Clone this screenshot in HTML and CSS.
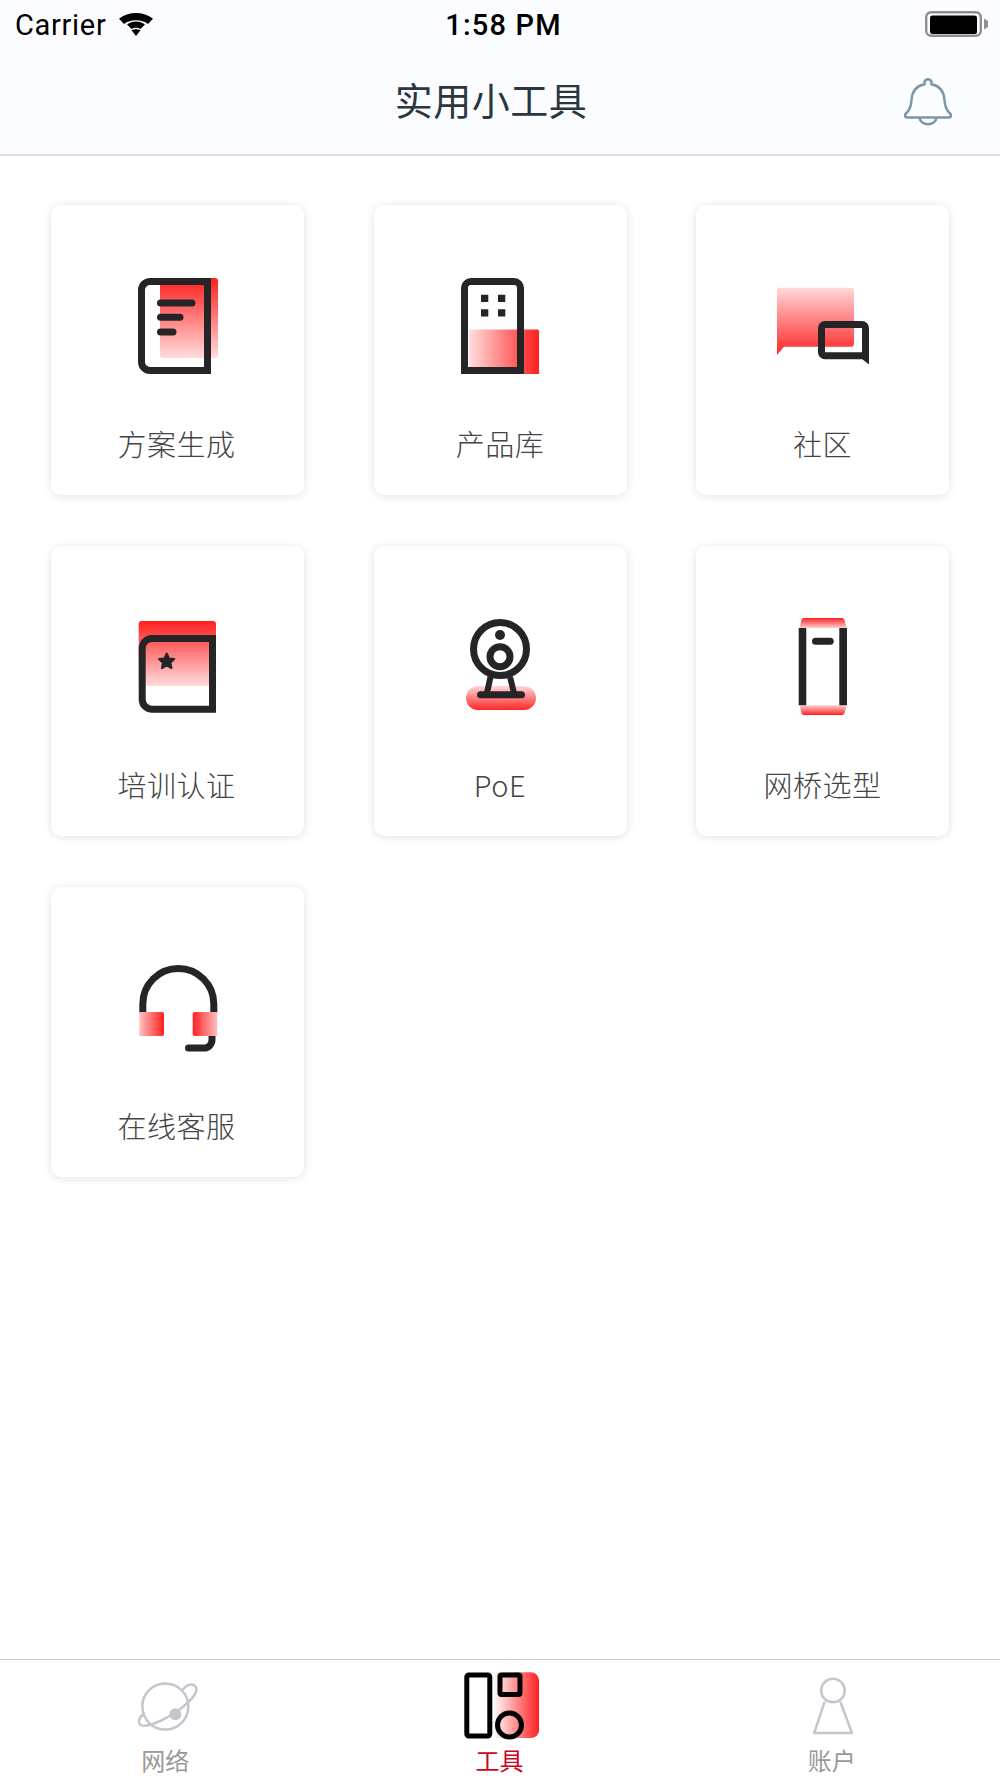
FILE: index.html
```html
<!DOCTYPE html>
<html lang="zh">
<head>
<meta charset="utf-8">
<title>实用小工具</title>
<link rel="stylesheet" href="styles.css">
</head>
<body>
<div class="page">
  <header class="header">
    <div class="status">
      <div class="status-left">
        <span class="carrier">Carrier</span>
        <svg class="wifi" viewBox="0 0 34 23"><path d="M0 5.700C9-1.900 25-1.900 34 5.700L29 11C22.500 6 11.500 6 5 11Z"/><path d="M8 11.500C13 7.500 21 7.500 26 11.500L21.500 16C19 14.300 15 14.300 12.500 16Z"/><path d="M12.500 17.300C15 15.800 19 15.800 21.500 17.300L17 23Z"/></svg>
      </div>
      <span class="time">1:58 PM</span>
      <svg class="battery" viewBox="0 0 63 26"><rect x="1.200" y="1.200" width="54.600" height="23.600" rx="5" fill="none" stroke="#8e8e8e" stroke-width="2.400"/><rect x="5" y="4.500" width="47" height="18.500" rx="2.500" fill="#000"/><path d="M59 7.500L63 10V16L59 18.500Z" fill="#8e8e8e"/></svg>
    </div>
    <div class="nav">
      <h1 class="title">实用小工具</h1>
      <svg class="bell" viewBox="0 0 48 48"><path d="M24 1.200a3.500 3.500 0 0 1 3.500 3.500v1.600C36 8 40 14.500 40.500 22C40.800 28 42 32 46 35.500C48 37.500 47 39.500 45 39.500H3C1 39.500 0 37.500 2 35.500C6 32 7.200 28 7.500 22C8 14.500 12 8 20.500 6.300V4.700A3.500 3.500 0 0 1 24 1.200Z"/><path d="M15.500 39.500C16 44 20 46.300 24 46.300S32 44 32.500 39.500"/></svg>
    </div>
  </header>

  <main class="grid">
    <a class="card">
      <svg class="icon" viewBox="0 0 101 100">
        <defs><linearGradient id="g1" x1="0" y1="0" x2="0" y2="1"><stop offset="0" stop-color="#ff1f1f"/><stop offset="1" stop-color="#ffdcdc"/></linearGradient></defs>
        <path d="M33 2H88a3 3 0 0 1 3 3V79a3 3 0 0 1-3 3H36a3 3 0 0 1-3-3Z" fill="url(#g1)"/>
        <path d="M80.500 5.500H23a8.500 8.500 0 0 0-8.500 8.500V86a8.500 8.500 0 0 0 8.500 8.500H80.500Z" fill="none" stroke="#252527" stroke-width="7"/>
        <path d="M33.500 27H65M33.500 41.300H53M33.500 56H46" fill="none" stroke="#252527" stroke-width="7" stroke-linecap="round"/>
      </svg>
      <span class="label">方案生成</span>
    </a>
    <a class="card">
      <svg class="icon" viewBox="0 0 101 100">
        <defs><linearGradient id="g2" x1="0" y1="0" x2="1" y2="0"><stop offset="0" stop-color="#ffdede"/><stop offset="1" stop-color="#ff1f1f"/></linearGradient></defs>
        <path d="M19 53.500H87a2 2 0 0 1 2 2V98H19Z" fill="url(#g2)"/>
        <path d="M14.500 94.500V12a6.500 6.500 0 0 1 6.500-6.500H64a6.500 6.500 0 0 1 6.500 6.500V94.500Z" fill="none" stroke="#252527" stroke-width="7"/>
        <path d="M31 18.700h7.300v7.300h-7.300ZM48 18.700h7.300v7.300h-7.300ZM31 33.300h7.300v7.300h-7.300ZM48 33.300h7.300v7.300h-7.300Z" fill="#252527"/>
      </svg>
      <span class="label">产品库</span>
    </a>
    <a class="card">
      <svg class="icon" viewBox="-1 0 101 100">
        <defs><linearGradient id="g3" x1="0" y1="0" x2="0" y2="1"><stop offset="0" stop-color="#ffd8d8"/><stop offset="1" stop-color="#ff2626"/></linearGradient></defs>
        <path d="M7 11.700H78a3 3 0 0 1 3 3V67.700a3 3 0 0 1-3 3H11L4 79V14.700a3 3 0 0 1 3-3Z" fill="url(#g3)"/>
        <rect x="48.500" y="48.500" width="44" height="31.300" rx="3.500" fill="none" stroke="#252527" stroke-width="7"/>
        <path d="M96 76V88.500L89 83Z" fill="#252527"/>
      </svg>
      <span class="label">社区</span>
    </a>
    <a class="card">
      <svg class="icon" viewBox="0 0 101 100">
        <defs><linearGradient id="g4" x1="0" y1="0" x2="0" y2="1"><stop offset="0" stop-color="#ff1f1f"/><stop offset="1" stop-color="#ffdcdc"/></linearGradient></defs>
        <path d="M14.700 4H86a3 3 0 0 1 3 3V69H11.700V7a3 3 0 0 1 3-3Z" fill="url(#g4)"/>
        <path d="M85.500 21.500H25a9.800 9.800 0 0 0-9.800 9.800V82.400a9.800 9.800 0 0 0 9.800 9.800H85.500Z" fill="none" stroke="#252527" stroke-width="7"/>
        <path d="M39.700 36.500L42 41.500L47.300 42.100L43.400 45.800L44.500 51.100L39.700 48.400L34.900 51.100L36 45.800L32.100 42.100L37.400 41.500Z" fill="#252527" stroke="#252527" stroke-width="2" stroke-linejoin="round"/>
      </svg>
      <span class="label">培训认证</span>
    </a>
    <a class="card">
      <svg class="icon" viewBox="0 0 101 100">
        <defs><linearGradient id="g5" x1="0" y1="0" x2="0" y2="1"><stop offset="0" stop-color="#ffd8d8"/><stop offset="1" stop-color="#ff2626"/></linearGradient></defs>
        <rect x="16" y="69" width="70" height="24" rx="12" fill="url(#g5)"/>
        <g fill="none" stroke="#252527">
          <circle cx="50" cy="32" r="26.500" stroke-width="7"/>
          <circle cx="50" cy="39.700" r="10" stroke-width="7"/>
          <path d="M40.500 60L36.500 78M60 60L64.500 78" stroke-width="6"/>
          <path d="M30.500 77.700H71.500" stroke-width="7" stroke-linecap="round"/>
        </g>
        <circle cx="50" cy="18" r="5" fill="#252527"/>
      </svg>
      <span class="label">PoE</span>
    </a>
    <a class="card">
      <svg class="icon" viewBox="-1 0 101 100">
        <defs>
          <linearGradient id="g6" x1="0" y1="0" x2="0" y2="1"><stop offset="0" stop-color="#ff1f1f"/><stop offset="1" stop-color="#ffd0d0"/></linearGradient>
          <linearGradient id="g7" x1="0" y1="0" x2="0" y2="1"><stop offset="0" stop-color="#ffd0d0"/><stop offset="1" stop-color="#ff1f1f"/></linearGradient>
        </defs>
        <path d="M31 1H69a2.500 2.500 0 0 1 2.500 2L73.500 11H26.500L28.500 3A2.500 2.500 0 0 1 31 1Z" fill="url(#g6)"/>
        <path d="M26.500 88.300H73.500L71.500 96A2.500 2.500 0 0 1 69 98H31A2.500 2.500 0 0 1 28.500 96Z" fill="url(#g7)"/>
        <path d="M25.700 11H33.300V88.300H25.700ZM66.300 11H74V88.300H66.300Z" fill="#252527"/>
        <path d="M42.500 24.300H57.200" fill="none" stroke="#252527" stroke-width="7" stroke-linecap="round"/>
      </svg>
      <span class="label">网桥选型</span>
    </a>
    <a class="card">
      <svg class="icon" viewBox="0 0 101 100">
        <defs>
          <linearGradient id="g8" x1="0" y1="0" x2="1" y2="0"><stop offset="0" stop-color="#ffc0c0"/><stop offset="1" stop-color="#ff2020"/></linearGradient>
          <linearGradient id="g9" x1="0" y1="0" x2="1" y2="0"><stop offset="0" stop-color="#ff2020"/><stop offset="1" stop-color="#ffc0c0"/></linearGradient>
        </defs>
        <path d="M15.800 55V46a35.500 35.500 0 0 1 71 0V55" fill="none" stroke="#252527" stroke-width="7"/>
        <path d="M85 78V82a8 8 0 0 1-8 8H61.500" fill="none" stroke="#252527" stroke-width="7" stroke-linecap="round"/>
        <path d="M12.300 54H35a2 2 0 0 1 2 2V76a2 2 0 0 1-2 2H12.300Z" fill="url(#g8)"/>
        <path d="M90.300 54H67.700a2 2 0 0 0-2 2V76a2 2 0 0 0 2 2H90.300Z" fill="url(#g9)"/>
      </svg>
      <span class="label">在线客服</span>
    </a>
  </main>

  <nav class="tabs">
    <a class="tab">
      <svg class="tab-icon" viewBox="-3.330 0 100 80">
        <g fill="none" stroke="#c5c5cf" stroke-width="2.500" stroke-linecap="round">
          <circle cx="45" cy="41.500" r="23"/>
          <path d="M23.500 48.500C18.500 53 17.500 57 19.500 59.500C22 62.500 31 60 41 55.500C56 48.500 69 37.500 74.500 29.500C77 25 76.500 21.500 73.500 20C70.500 18.800 66.500 20 63 24"/>
        </g>
        <circle cx="55" cy="49.300" r="6" fill="#c5c5cf"/>
      </svg>
      <span class="tab-label">网络</span>
    </a>
    <a class="tab tab-active">
      <svg class="tab-icon" viewBox="0 0 100 80">
        <defs><linearGradient id="g10" x1="0" y1="0" x2="1" y2="0"><stop offset="0" stop-color="#fff"/><stop offset="1" stop-color="#ff1f1f"/></linearGradient></defs>
        <path d="M42.700 7.300H81a8 8 0 0 1 8 8V65a8 8 0 0 1-8 8H42.700Z" fill="url(#g10)"/>
        <g fill="none" stroke="#000" stroke-width="5">
          <rect x="16.800" y="10" width="23" height="61" rx="2"/>
          <rect x="50" y="10" width="20" height="19.500" rx="1.500"/>
          <circle cx="59.500" cy="60" r="12"/>
        </g>
      </svg>
      <span class="tab-label">工具</span>
    </a>
    <a class="tab">
      <svg class="tab-icon" viewBox="-6.670 0 100 80">
        <g fill="none" stroke="#c5c5cf" stroke-width="2.500" stroke-linejoin="round">
          <circle cx="43.300" cy="25.500" r="11.800"/>
          <path d="M35 36.700L24.500 68H62.300L50.700 36.700"/>
        </g>
      </svg>
      <span class="tab-label">账户</span>
    </a>
  </nav>
</div>
</body>
</html>
```

FILE: styles.css
```css
* { box-sizing: border-box; }
html, body { margin: 0; padding: 0; background: #fff; }
body { font-family: "Noto Sans CJK SC", "Noto Sans", sans-serif; }
.page { display: flex; flex-direction: column; height: 1778px; overflow: hidden; }

.header { background: #fbfcff; border-bottom: 2px solid #dedede; height: 156px; flex: none; }
.status { display: grid; grid-template-columns: 1fr auto 1fr; align-items: center; height: 50px; padding: 0 12px 0 15px; font-family: Roboto, "Liberation Sans", sans-serif; font-size: 29px; color: #000; }
.status-left { display: flex; align-items: center; gap: 13px; }
.carrier { letter-spacing: 0.7px; line-height: 50px; }
.wifi { width: 34px; height: 23px; display: block; fill: #000; margin-top: -2px; }
.time { margin-left: 4px; font-weight: 500; letter-spacing: 1.2px; line-height: 50px; }
.battery { width: 63px; height: 26px; display: block; justify-self: end; margin-top: -2px; }
.nav { display: flex; align-items: center; height: 104px; padding: 0 48px 0 78px; }
.title { flex: 1; margin: 0 0 6px; text-align: center; font-size: 38px; font-weight: 400; letter-spacing: 0.5px; line-height: 50px; color: #2b373e; }
.bell { width: 48px; height: 48px; display: block; fill: none; stroke: #7a97a5; stroke-width: 2.5; }

.grid { flex: 1; display: grid; grid-template-columns: repeat(3, 253px); grid-auto-rows: 290px; gap: 51px 69.5px; align-content: start; padding: 49px 0 0 51px; }
.card { display: flex; flex-direction: column; align-items: center; padding-top: 71px; background: #fff; border-radius: 10px; box-shadow: 0 1px 10px rgba(0, 0, 0, 0.12); }
.icon { width: 101px; height: 100px; display: block; flex: none; }
.label { margin-top: 47px; font-size: 29px; font-weight: 300; letter-spacing: 0.5px; line-height: 40px; color: #444; }
.card:nth-child(3n+1) .label { padding-right: 2px; }

.tabs { flex: none; display: flex; height: 119px; border-top: 1px solid #c9c9c9; padding-top: 5px; background: #fff; }
.tab { flex: 1; display: flex; flex-direction: column; align-items: center; }
.tab-icon { width: 100px; height: 80px; display: block; flex: none; }
.tab-label { margin-top: 3px; padding-right: 3px; font-size: 24px; line-height: 24px; color: #999; }
.tab-active .tab-label { padding-right: 1px; color: #d0021b; }
```
